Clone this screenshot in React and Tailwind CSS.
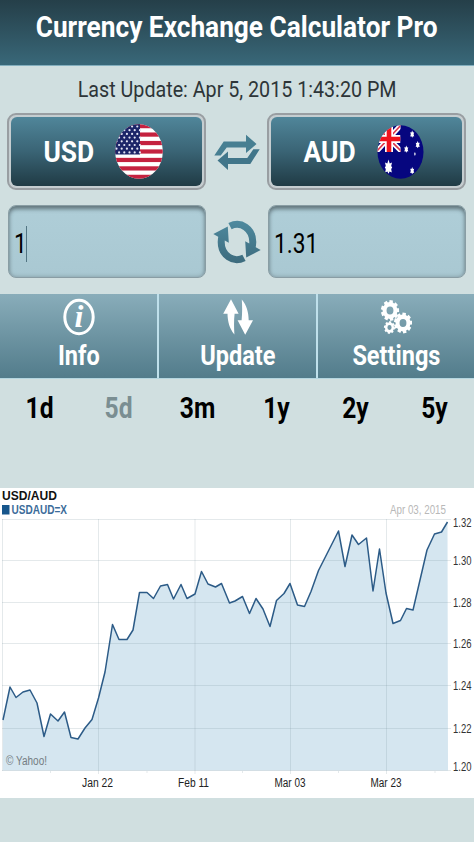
import clsx from "clsx";

const ranges = ["1d", "5d", "3m", "1y", "2y", "5y"];

// Points of the exchange rate line, in chart pixels
const points = [
  [3, 232], [10, 199], [16, 209.5], [23, 204], [30, 202], [37, 215], [44, 248.5],
  [50.5, 226], [58, 233], [64.5, 224], [71, 249.5], [78, 251], [85, 240], [92, 231.5],
  [98.5, 210], [105, 184], [112.5, 136.5], [119, 151.5], [127, 151.5], [133, 142],
  [139.5, 104.5], [147, 104.5], [153.5, 110.5], [160.5, 98], [167.5, 96.5], [173.5, 111],
  [181, 96.5], [187, 110.5], [195, 106], [201.5, 83.5], [208, 96], [215.5, 99],
  [221.5, 95.5], [229.5, 115], [235, 113], [242.5, 108.5], [249.5, 125.5], [256, 110.5],
  [263, 121], [270, 138.5], [276.5, 112.5], [284, 105.5], [290, 95.5], [297.5, 117],
  [304.5, 118.5], [311, 103.5], [318.5, 82.5], [338.5, 43], [345, 78.5], [352, 47],
  [358.5, 56.5], [366.5, 50], [373, 103], [379.5, 61], [386, 105], [393, 135.5],
  [400.5, 132.5], [406.5, 120.5], [413, 122], [420, 92], [427, 62], [434.5, 46],
  [441.5, 44], [447.5, 34],
];
const line = points.map((p) => p.join(",")).join(" ");

const yLabels = [
  ["1.32", 39, 31.5],
  ["1.30", 77, 72.5],
  ["1.28", 119, 114.5],
  ["1.26", 160, 155.5],
  ["1.24", 202, 197.5],
  ["1.22", 245, 240.5],
  ["1.20", 283, 282.5],
];

const xLabels = [
  ["Jan 22", 97.5, 98.5],
  ["Feb 11", 193.5, 195],
  ["Mar 03", 290, 290.5],
  ["Mar 23", 386, 386.5],
];

const UsFlag = () => (
  <svg className="h-[55px] w-12" viewBox="0 0 48 55">
    <clipPath id="us">
      <ellipse cx="24" cy="27.5" rx="23.8" ry="27.2" />
    </clipPath>
    <g clipPath="url(#us)">
      <rect width="48" height="55" fill="#fff" />
      {[0, 1, 2, 3, 4, 5, 6].map((i) => (
        <rect key={i} y={i * 8.46} width="48" height="4.23" fill="#c4213f" />
      ))}
      <rect width="25" height="30.5" fill="#1c2568" />
      {[0, 1, 2, 3, 4, 5, 6, 7].map((row) =>
        [0, 1, 2, 3, 4].map((col) => (
          <circle
            key={`${row}-${col}`}
            cx={1.5 + col * 5.2 + (row % 2) * 2.6}
            cy={2.5 + row * 3.7}
            r="1.1"
            fill="#e3e5f4"
          />
        ))
      )}
    </g>
  </svg>
);

const AuFlag = () => (
  <svg className="h-[54px] w-[47px]" viewBox="0 0 47 54">
    <clipPath id="au">
      <ellipse cx="23.5" cy="27" rx="23" ry="26.7" />
    </clipPath>
    <clipPath id="jack">
      <rect width="23.5" height="27" />
    </clipPath>
    <g clipPath="url(#au)">
      <rect width="47" height="54" fill="#06067f" />
      <g clipPath="url(#jack)">
        <path d="M-1 1L25 27M25 -1L-1 27" stroke="#fff" strokeWidth="5" />
        <path d="M-1 1L25 27M25 -1L-1 27" stroke="#e0384c" strokeWidth="1.6" />
        <path d="M12 0V27M0 14H23.5" stroke="#fff" strokeWidth="8" />
        <path d="M12 0V27M0 14H23.5" stroke="#f0141e" strokeWidth="4.6" />
      </g>
      <g fill="#fff">
        <path d="M11.5 34.5l1.2 4 2.3-1-.8 3.6 1 1.4-1 1.6.6 3.5-2.2-1.2-1.1 2.4-1.1-2.4-2.2 1.2.6-3.5-1-1.6 1-1.4-.8-3.6 2.3 1z" />
        <path d="M35.2 5.5l.8 2 1.2-.2-.6 2 .6 2.2-1.2-.2-.8 1.5-.8-1.5-1.2.2.6-2.2-.6-2 1.2.2z" />
        <path d="M40.7 16l.8 2 1.2-.2-.6 2 .6 2.2-1.2-.2-.8 1.5-.8-1.5-1.2.2.6-2.2-.6-2 1.2.2z" />
        <path d="M29.3 20.5l.8 2 1.2-.2-.6 2 .6 2.2-1.2-.2-.8 1.5-.8-1.5-1.2.2.6-2.2-.6-2 1.2.2z" />
        <path d="M35.2 42l.8 2 1.2-.2-.6 2 .6 2.2-1.2-.2-.8 1.5-.8-1.5-1.2.2.6-2.2-.6-2 1.2.2z" />
        <path d="M37.9 27l.8 2-.8 2-.8-2z" />
      </g>
    </g>
  </svg>
);

const SwapIcon = () => (
  <svg className="h-9 w-[46px]" viewBox="0 0 46 36">
    <g fill="#477f92">
      <path d="M.3 21.5L9.7 7.5H32V.8L42.5 10 32 19V13.5H12.7L6.7 21.5z" />
      <path fill="#41768a" d="M45.7 15.3L36.3 30H14V36L3.5 26.5 14 17.5V24H33.3L39.3 15.3z" />
    </g>
  </svg>
);

const RefreshIcon = () => (
  <svg className="h-[46px] w-12" viewBox="0 0 48 46">
    <defs>
      <linearGradient id="refresh" x1="0" y1="0" x2="0" y2="46" gradientUnits="userSpaceOnUse">
        <stop stopColor="#4f8ba0" />
        <stop offset="1" stopColor="#3c6a7c" />
      </linearGradient>
    </defs>
    <g fill="none" stroke="url(#refresh)" strokeWidth="7">
      <path d="M17 7.2C28 1.5 39.8 10 39.8 23C39.8 26 39.3 28 38.5 30" />
      <path d="M31 38.8C20 44.5 8.2 36 8.2 23C8.2 20 8.7 18 9.5 16" />
    </g>
    <g fill="url(#refresh)">
      <path d="M32.2 22.3L47.7 31 33.2 38.5z" />
      <path d="M15.8 23.7L.3 15 14.8 7.5z" />
    </g>
  </svg>
);

const InfoIcon = () => (
  <svg className="h-[38px] w-8" viewBox="0 0 32 38">
    <ellipse cx="16" cy="19" rx="14.2" ry="16.8" fill="none" stroke="#fff" strokeWidth="3" />
    <text x="16" y="28.5" textAnchor="middle" fill="#fff" fontSize="32" fontFamily="Liberation Serif, serif" fontStyle="italic" fontWeight="bold">
      i
    </text>
  </svg>
);

const UpdateIcon = () => (
  <svg className="h-[38px] w-8" viewBox="0 0 32 38">
    <g fill="#fff">
      <path d="M9 1.3L16.6 15.8H12.6C11.8 23 12 29 12.4 36.5C7.5 30.5 5.7 24 5.5 15.8H1.2z" />
      <path d="M23.2 36.7L15.6 22.2H19.6C20.4 15 20.2 8 19.8 1.5C24.7 7.5 26.5 14 26.7 22.2H31z" />
    </g>
  </svg>
);

const Gear = ({ cx, cy, r, teeth }) => (
  <g transform={`translate(${cx} ${cy}) scale(.88 1)`}>
    <circle r={r * 0.6} fill="none" stroke="#fff" strokeWidth={r * 0.44} />
    {Array.from({ length: teeth }, (_, i) => (
      <rect
        key={i}
        x={-r * 0.19}
        y={-r}
        width={r * 0.38}
        height={r * 0.3}
        fill="#fff"
        transform={`rotate(${(i * 360) / teeth + 8})`}
      />
    ))}
  </g>
);

const SettingsIcon = () => (
  <svg className="h-[38px] w-8" viewBox="0 0 32 38">
    <Gear cx={10} cy={12.5} r={10.3} teeth={9} />
    <Gear cx={23} cy={25} r={10.3} teeth={9} />
    <Gear cx={9.5} cy={29.5} r={6.3} teeth={8} />
  </svg>
);

const menu = [
  { label: "Info", icon: <InfoIcon /> },
  { label: "Update", icon: <UpdateIcon /> },
  { label: "Settings", icon: <SettingsIcon /> },
];

const CurrencyButton = ({ code, flag, className }) => (
  <button
    type="button"
    className="h-[77px] w-[199px] rounded-[9px] border-2 border-[#999ea2] bg-[#c5cdd0] p-[2px]"
  >
    <span
      className={clsx(
        "flex h-full items-center rounded-md bg-linear-to-b from-[#50869a] via-[#3a6475] to-[#203b45]",
        className
      )}
    >
      <span className="w-[52px] text-center">
        <span className="-mx-5 inline-block scale-x-[0.88] text-[30px] font-bold text-white">
          {code}
        </span>
      </span>
      {flag}
    </span>
  </button>
);

const AmountField = ({ value, focused }) => (
  <div className="flex h-[73px] w-[198px] items-center rounded-lg border border-[#899da4] bg-linear-to-b from-[#afced8] to-[#a9c8d2] pt-[5px] pl-[5px] shadow-[inset_0_4px_4px_-1px_#63777e,inset_0_0_4px_#7f969f]">
    <span className="origin-left scale-x-[0.81] text-[28px] text-black">{value}</span>
    {focused && <span className="-ml-1 h-9 w-px bg-[#527583]" />}
  </div>
);

const Chart = () => (
  <svg className="block h-[310px] w-full bg-white" viewBox="0 0 474 310" fontFamily="Liberation Sans, Arial, sans-serif">
    <text x="2" y="11.5" fontSize="13" fontWeight="bold" fill="#111" textLength="55" lengthAdjust="spacingAndGlyphs">
      USD/AUD
    </text>
    <rect x="2" y="17" width="7.5" height="9.5" fill="#17568c" />
    <text x="11.5" y="26" fontSize="12" fontWeight="bold" fill="#3c6c9a" textLength="55.5" lengthAdjust="spacingAndGlyphs">
      USDAUD=X
    </text>
    <text x="390" y="26" fontSize="12" fill="#b8b8b8" textLength="56" lengthAdjust="spacingAndGlyphs">
      Apr 03, 2015
    </text>

    <polygon points={`3,282.5 ${line} 448,282.5`} fill="#d5e6f0" />

    {/* Grid */}
    <g stroke="#79909b" strokeOpacity="0.2" strokeWidth="1">
      {yLabels.map(([label, , y]) => (
        <path key={label} d={`M2 ${y}H451`} />
      ))}
      <path d="M2.5 31V283" />
      {xLabels.map(([label, , x]) => (
        <path key={label} d={`M${x} 31V286`} />
      ))}
      <path d="M50.5 283v2M147 283v2M242.5 283v2M338.5 283v2M435 283v2" />
    </g>

    <polyline points={line} fill="none" stroke="#2c5b87" strokeWidth="1.5" strokeLinejoin="round" />

    {yLabels.map(([label, y]) => (
      <text key={label} transform={`translate(453 ${y}) scale(.79 1)`} fontSize="12" fill="#333">
        {label}
      </text>
    ))}
    {xLabels.map(([label, x]) => (
      <text key={label} x={x} y="298.5" fontSize="12" fill="#222" textAnchor="middle" textLength="31" lengthAdjust="spacingAndGlyphs">
        {label}
      </text>
    ))}
    <text x="6" y="277" fontSize="12" fill="#747d82" textLength="41" lengthAdjust="spacingAndGlyphs">
      © Yahoo!
    </text>
  </svg>
);

export default function App() {
  return (
    <div className="h-[842px] w-[474px] overflow-hidden bg-[#d0dfe0] font-[Roboto,sans-serif]">
      <header className="flex h-[66px] items-center justify-center border-b border-[#82aebd] bg-linear-to-b from-[#253f49] to-[#396879] pb-[13px]">
        <h1 className="scale-x-[0.875] text-[30px] font-bold whitespace-nowrap text-white">
          Currency Exchange Calculator Pro
        </h1>
      </header>

      <div className="flex h-[47px] items-center justify-center">
        <p className="scale-x-[0.875] text-[22.5px] whitespace-nowrap text-[#2d3538]">
          Last Update: Apr 5, 2015 1:43:20 PM
        </p>
      </div>

      {/* Currency selection */}
      <div className="flex items-center justify-between pr-2 pl-[7px]">
        <CurrencyButton code="USD" flag={<UsFlag />} className="gap-5 pl-8" />
        <SwapIcon />
        <CurrencyButton code="AUD" flag={<AuFlag />} className="gap-[21px] pl-[33px]" />
      </div>

      {/* Amounts */}
      <div className="mt-[15px] flex items-center justify-between px-2">
        <AmountField value="1" focused />
        <RefreshIcon />
        <AmountField value="1.31" />
      </div>

      <nav className="mt-4 grid h-[85px] grid-cols-[159px_159px_156px] border-b border-[#b4d6e0] bg-linear-to-b from-[#89adba] to-[#527c8b]">
        {menu.map(({ label, icon }, i) => (
          <button
            key={label}
            type="button"
            className={clsx(
              "flex flex-col items-center pt-1",
              i < 2 && "border-r-2 border-[#bfe0eb]"
            )}
          >
            {icon}
            <span className="mt-[2px] scale-x-[0.84] text-[28px] leading-9 font-bold text-white">
              {label}
            </span>
          </button>
        ))}
      </nav>

      <div className="grid h-[109px] grid-cols-6 pt-2">
        {ranges.map((range) => (
          <button
            key={range}
            type="button"
            className={clsx(
              "h-11 scale-x-[0.85] text-[29px] font-bold",
              range === "5d" ? "text-[#7a8e92]" : "text-black"
            )}
          >
            {range}
          </button>
        ))}
      </div>

      <Chart />
    </div>
  );
}
